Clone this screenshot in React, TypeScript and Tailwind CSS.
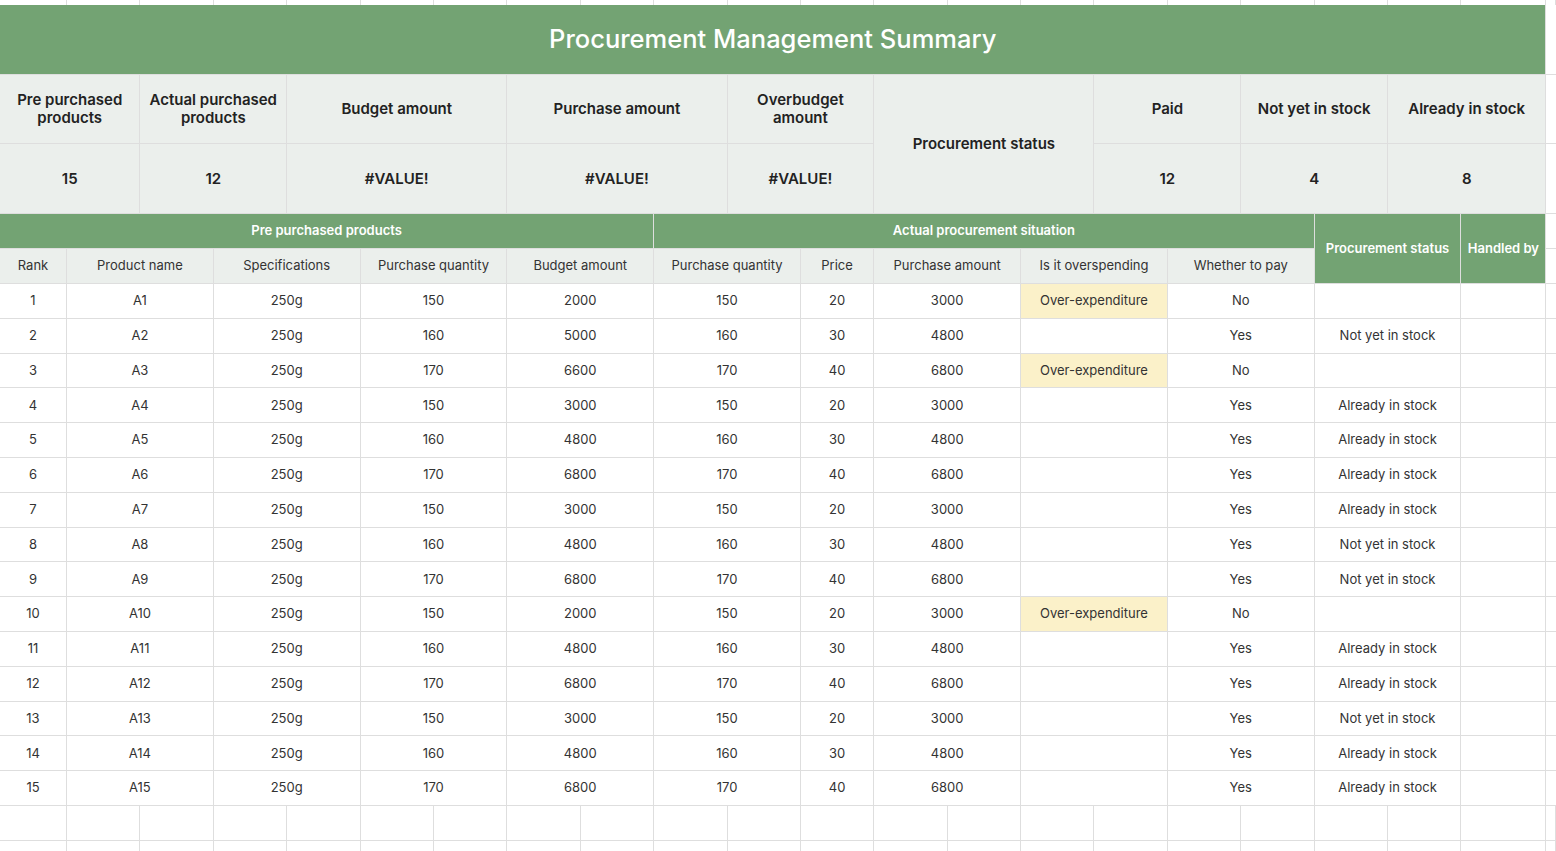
const rows = [
  ['1', 'A1', '150', '2000', '150', '20', '3000', true, 'No', ''],
  ['2', 'A2', '160', '5000', '160', '30', '4800', false, 'Yes', 'Not yet in stock'],
  ['3', 'A3', '170', '6600', '170', '40', '6800', true, 'No', ''],
  ['4', 'A4', '150', '3000', '150', '20', '3000', false, 'Yes', 'Already in stock'],
  ['5', 'A5', '160', '4800', '160', '30', '4800', false, 'Yes', 'Already in stock'],
  ['6', 'A6', '170', '6800', '170', '40', '6800', false, 'Yes', 'Already in stock'],
  ['7', 'A7', '150', '3000', '150', '20', '3000', false, 'Yes', 'Already in stock'],
  ['8', 'A8', '160', '4800', '160', '30', '4800', false, 'Yes', 'Not yet in stock'],
  ['9', 'A9', '170', '6800', '170', '40', '6800', false, 'Yes', 'Not yet in stock'],
  ['10', 'A10', '150', '2000', '150', '20', '3000', true, 'No', ''],
  ['11', 'A11', '160', '4800', '160', '30', '4800', false, 'Yes', 'Already in stock'],
  ['12', 'A12', '170', '6800', '170', '40', '6800', false, 'Yes', 'Already in stock'],
  ['13', 'A13', '150', '3000', '150', '20', '3000', false, 'Yes', 'Not yet in stock'],
  ['14', 'A14', '160', '4800', '160', '30', '4800', false, 'Yes', 'Already in stock'],
  ['15', 'A15', '170', '6800', '170', '40', '6800', false, 'Yes', 'Already in stock'],
] as const

const cell = 'flex items-center justify-center text-center border-r border-b border-[#dedede] min-w-0'
const sum = `${cell} bg-[#ebefec] text-[15px] font-semibold text-[#222] leading-[18px]`
const green = `${cell} bg-[#73a373] text-white text-[13px] font-semibold`
const head = `${cell} bg-[#ebefec] text-[13px] text-[#333]`
const data = `${cell} text-[13px] text-[#333]`

function BlankRow({ thin }: { thin?: boolean }) {
  return (
    <>
      {Array.from({ length: 22 }).map((_, i) => (
        <div key={i} className={thin ? 'border-r border-[#dedede]' : 'border-r border-b border-[#dedede]'} />
      ))}
    </>
  )
}

export default function App() {
  return (
    <div className="h-[851px] w-[1556px] overflow-hidden bg-white" style={{ fontFamily: 'Inter, "Noto Sans", sans-serif' }}>
      <div className="grid grid-cols-[67px_repeat(19,73.4px)_85px_1fr] grid-rows-[5px_70px_69px_70px_35px_35px_repeat(15,34.8px)_35px_35px]">
        <BlankRow thin />

        {/* Title */}
        <div className={`${cell} col-span-21 bg-[#73a373] text-white text-[25.5px] font-medium`}>
          Procurement Management Summary
        </div>
        <div className="border-b border-[#dedede]" />

        {/* Summary */}
        <div className={`${sum} col-span-2`}>Pre purchased<br />products</div>
        <div className={`${sum} col-span-2`}>Actual purchased<br />products</div>
        <div className={`${sum} col-span-3`}>Budget amount</div>
        <div className={`${sum} col-span-3`}>Purchase amount</div>
        <div className={`${sum} col-span-2`}>Overbudget<br />amount</div>
        <div className={`${sum} col-span-3 row-span-2`}>Procurement status</div>
        <div className={`${sum} col-span-2`}>Paid</div>
        <div className={`${sum} col-span-2`}>Not yet in stock</div>
        <div className={`${sum} col-span-2`}>Already in stock</div>
        <div className="border-b border-[#dedede]" />

        <div className={`${sum} col-span-2`}>15</div>
        <div className={`${sum} col-span-2`}>12</div>
        <div className={`${sum} col-span-3`}>#VALUE!</div>
        <div className={`${sum} col-span-3`}>#VALUE!</div>
        <div className={`${sum} col-span-2`}>#VALUE!</div>
        <div className={`${sum} col-span-2`}>12</div>
        <div className={`${sum} col-span-2`}>4</div>
        <div className={`${sum} col-span-2`}>8</div>
        <div className="border-b border-[#dedede]" />

        {/* Table head */}
        <div className={`${green} col-span-9`}>Pre purchased products</div>
        <div className={`${green} col-span-9`}>Actual procurement situation</div>
        <div className={`${green} col-span-2 row-span-2`}>Procurement status</div>
        <div className={`${green} row-span-2`}>Handled by</div>
        <div className="border-b border-[#dedede]" />

        <div className={head}>Rank</div>
        <div className={`${head} col-span-2`}>Product name</div>
        <div className={`${head} col-span-2`}>Specifications</div>
        <div className={`${head} col-span-2`}>Purchase quantity</div>
        <div className={`${head} col-span-2`}>Budget amount</div>
        <div className={`${head} col-span-2`}>Purchase quantity</div>
        <div className={head}>Price</div>
        <div className={`${head} col-span-2`}>Purchase amount</div>
        <div className={`${head} col-span-2`}>Is it overspending</div>
        <div className={`${head} col-span-2`}>Whether to pay</div>
        <div className="border-b border-[#dedede]" />

        {rows.map(r => (
          <div key={r[0]} className="contents">
            <div className={data}>{r[0]}</div>
            <div className={`${data} col-span-2`}>{r[1]}</div>
            <div className={`${data} col-span-2`}>250g</div>
            <div className={`${data} col-span-2`}>{r[2]}</div>
            <div className={`${data} col-span-2`}>{r[3]}</div>
            <div className={`${data} col-span-2`}>{r[4]}</div>
            <div className={data}>{r[5]}</div>
            <div className={`${data} col-span-2`}>{r[6]}</div>
            <div className={`${data} col-span-2 ${r[7] ? 'bg-[#fbf1c9]' : ''}`}>{r[7] ? 'Over-expenditure' : ''}</div>
            <div className={`${data} col-span-2`}>{r[8]}</div>
            <div className={`${data} col-span-2`}>{r[9]}</div>
            <div className={data} />
            <div className="border-b border-[#dedede]" />
          </div>
        ))}

        <BlankRow />
        <BlankRow />
      </div>
    </div>
  )
}
